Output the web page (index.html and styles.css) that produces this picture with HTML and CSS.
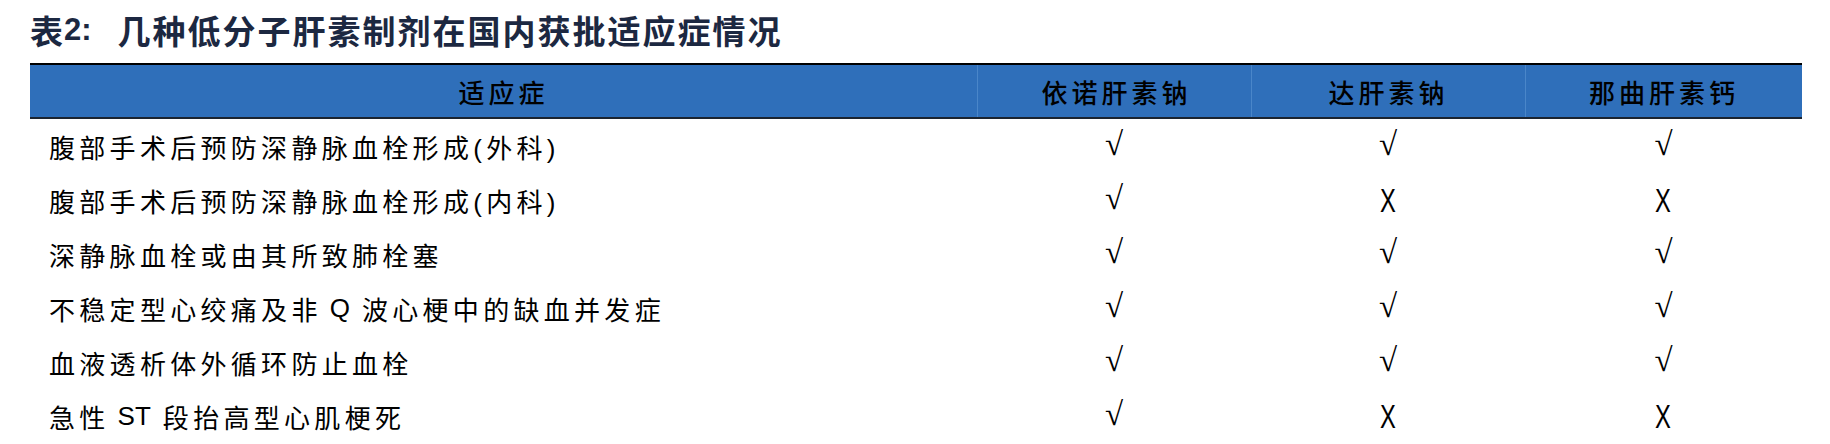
FILE: index.html
```html
<!DOCTYPE html>
<html lang="zh-CN">
<head>
<meta charset="utf-8">
<title>表2</title>
<link rel="stylesheet" href="styles.css">
</head>
<body>
<div class="page">
  <h1 class="title"><span class="t-biao">表</span><span class="t-num">2:</span><span class="t-text">几种低分子肝素制剂在国内获批适应症情况</span></h1>
  <div class="table">
    <div class="row head">
      <div class="cell c1">适应症</div>
      <div class="cell c2">依诺肝素钠</div>
      <div class="cell c3">达肝素钠</div>
      <div class="cell c4">那曲肝素钙</div>
    </div>
    <div class="row">
      <div class="cell c1">腹部手术后预防深静脉血栓形成(外科)</div>
      <div class="cell c2"><span class="ok">√</span></div>
      <div class="cell c3"><span class="ok">√</span></div>
      <div class="cell c4"><span class="ok">√</span></div>
    </div>
    <div class="row">
      <div class="cell c1">腹部手术后预防深静脉血栓形成(内科)</div>
      <div class="cell c2"><span class="ok">√</span></div>
      <div class="cell c3"><span class="no">X</span></div>
      <div class="cell c4"><span class="no">X</span></div>
    </div>
    <div class="row">
      <div class="cell c1">深静脉血栓或由其所致肺栓塞</div>
      <div class="cell c2"><span class="ok">√</span></div>
      <div class="cell c3"><span class="ok">√</span></div>
      <div class="cell c4"><span class="ok">√</span></div>
    </div>
    <div class="row">
      <div class="cell c1">不稳定型心绞痛及非<span class="lat">Q</span>波心梗中的缺血并发症</div>
      <div class="cell c2"><span class="ok">√</span></div>
      <div class="cell c3"><span class="ok">√</span></div>
      <div class="cell c4"><span class="ok">√</span></div>
    </div>
    <div class="row">
      <div class="cell c1">血液透析体外循环防止血栓</div>
      <div class="cell c2"><span class="ok">√</span></div>
      <div class="cell c3"><span class="ok">√</span></div>
      <div class="cell c4"><span class="ok">√</span></div>
    </div>
    <div class="row">
      <div class="cell c1">急性<span class="lat">ST</span>段抬高型心肌梗死</div>
      <div class="cell c2"><span class="ok">√</span></div>
      <div class="cell c3"><span class="no">X</span></div>
      <div class="cell c4"><span class="no">X</span></div>
    </div>
  </div>
</div>
</body>
</html>
```

FILE: styles.css
```css
html, body {
  margin: 0;
  padding: 0;
  background: #ffffff;
}

body {
  font-family: "Liberation Sans", "Noto Sans CJK SC", sans-serif;
  color: #000000;
}

.page {
  padding-left: 30px;
  width: 1772px;
}

.title {
  margin: 0;
  padding-top: 10px;
  height: 40px;
  padding-bottom: 13px;
  line-height: 40px;
  font-size: 33px;
  font-weight: 700;
  color: #1c2841;
  white-space: nowrap;
  display: flex;
  align-items: center;
}

.t-biao {
  font-family: "Noto Sans CJK SC", sans-serif;
}

.t-num {
  font-family: "Liberation Sans", sans-serif;
  font-weight: 700;
  font-size: 31px;
  margin-left: 1px;
  margin-right: 26px;
}

.t-text {
  font-family: "Noto Sans CJK SC", sans-serif;
  letter-spacing: 2px;
}

.table {
  display: flex;
  flex-direction: column;
}

.row {
  display: grid;
  grid-template-columns: 947px 274px 274px 277px;
  height: 54px;
  align-items: center;
}

.row.head {
  height: 52px;
  background: #2f6fba;
  border-top: 2px solid #000000;
  border-bottom: 2px solid #1b2430;
}

.cell {
  height: 100%;
  display: flex;
  align-items: center;
  justify-content: center;
  font-size: 26px;
  letter-spacing: 4.3px;
  white-space: nowrap;
}

.row:not(.head) .c1 {
  justify-content: flex-start;
  padding-left: 19px;
}

.head .cell {
  font-family: "Noto Sans CJK SC", sans-serif;
  font-size: 26px;
  font-weight: 500;
  letter-spacing: 4px;
  color: #000000;
}

.head .c2,
.head .c3,
.head .c4 {
  border-left: 1px solid #4a86c9;
}

.head .c2 {
  padding-left: 4px;
}

.lat {
  font-family: "Liberation Sans", sans-serif;
  letter-spacing: 0;
  margin: 0 12px 0 8px;
}

.ok {
  font-family: "Liberation Serif", serif;
  font-size: 33px;
  letter-spacing: 0;
  line-height: 1;
  margin-top: -3px;
}

.no {
  display: inline-block;
  font-family: "Liberation Sans", sans-serif;
  font-size: 33px;
  letter-spacing: 0;
  line-height: 1;
  transform: scaleX(0.72);
}
```
